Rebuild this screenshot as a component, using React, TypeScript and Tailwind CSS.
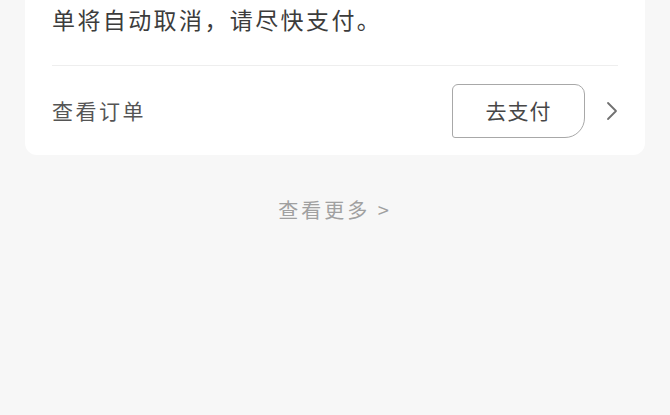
export default function App() {
  return (
    <div
      className="h-[415px] w-[670px] bg-[#f7f7f7] overflow-hidden"
      style={{ fontFamily: '"Noto Sans CJK SC", "Noto Sans", sans-serif' }}
    >
      {/* 订单卡片（顶部被滚动裁掉） */}
      <div className="mx-[25px] w-[620px] rounded-b-[12px] bg-white px-[27px]">
        <div className="h-[66px] border-b border-[#eeeeee] pt-[4px]">
          <p className="text-[23px] leading-[30px] tracking-[2.4px] text-[#3c3c3c]">
            单将自动取消，请尽快支付。
          </p>
        </div>
        <div className="flex h-[89px] items-center">
          <span className="text-[21px] tracking-[2.5px] text-[#555555]">查看订单</span>
          <div className="ml-auto flex items-center">
            <button className="flex h-[54px] w-[133px] items-center justify-center rounded-[6px_10px_20px_3px] border border-[#a8a8a8] bg-white text-[21px] tracking-[1px] text-[#474747]">
              去支付
            </button>
            <svg
              className="ml-[21px]"
              width="12"
              height="20"
              viewBox="0 0 12 20"
              fill="none"
              stroke="#707070"
              strokeWidth="1.8"
              strokeLinecap="round"
              strokeLinejoin="round"
            >
              <path d="M2 2l8 8-8 8" />
            </svg>
          </div>
        </div>
      </div>

      <div className="mt-[43px] text-center text-[20px] leading-[24px] tracking-[3px] text-[#a0a0a0]">
        查看更多 &gt;
      </div>
    </div>
  );
}
